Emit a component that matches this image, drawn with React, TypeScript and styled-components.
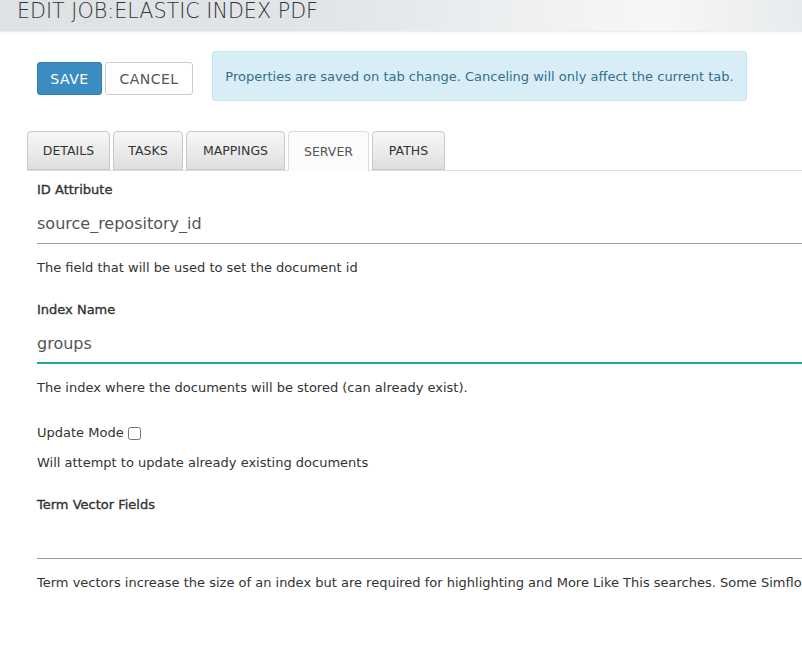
import React from "react";
import styled, { createGlobalStyle } from "styled-components";

const Global = createGlobalStyle`
  html, body { margin: 0; padding: 0; background: #fff; overflow: hidden; }
  body { font-family: "DejaVu Sans", "Open Sans", sans-serif; color: #333; }
  * { box-sizing: border-box; }
`;

const Header = styled.header`
  height: 32px;
  width: 100%;
  background: linear-gradient(to right, #dee2e5 0%, #e1e5e8 40%, #f6f7f8 82%, #e8ebed 100%);
  border-bottom: 1px solid #eceef0;
  box-shadow: 0 1px 2px rgba(0, 0, 0, 0.04);
`;

const Title = styled.h1`
  margin: 0;
  padding-left: 17px;
  font-size: 20.7px;
  line-height: 22px;
  font-weight: 300;
  color: #333;
  white-space: nowrap;
`;

const Main = styled.main`
  padding: 0 0 0 27px;
  width: 1000px;
`;

const Toolbar = styled.div`
  display: flex;
  align-items: flex-start;
  padding-left: 10px;
  margin-top: 19px;
`;

const Button = styled.button<{ $primary?: boolean; $w: number }>`
  width: ${(p) => p.$w}px;
  height: 33px;
  margin-top: 11px;
  padding: 0;
  font-family: inherit;
  font-size: 14px;
  letter-spacing: 0.5px;
  border-radius: 3px;
  border: 1px solid ${(p) => (p.$primary ? "#2e7db3" : "#ccc")};
  background: ${(p) => (p.$primary ? "#3a8cc1" : "#fff")};
  color: ${(p) => (p.$primary ? "#fff" : "#555")};
  margin-right: 3px;
  cursor: pointer;
`;

const Alert = styled.div`
  margin-left: 16px;
  width: 535px;
  height: 50px;
  display: flex;
  align-items: center;
  justify-content: center;
  background: #d9edf7;
  border: 1px solid #bce8f1;
  border-radius: 3px;
  color: #31708f;
  font-size: 13px;
  white-space: nowrap;
`;

const TabBar = styled.div`
  display: flex;
  gap: 3px;
  margin-top: 30px;
  border-bottom: 1px solid #ddd;
  height: 40px;
`;

const Tab = styled.div<{ $active?: boolean; $w: number }>`
  width: ${(p) => p.$w}px;
  height: ${(p) => (p.$active ? 40 : 39)}px;
  display: flex;
  align-items: center;
  justify-content: center;
  font-size: 12.5px;
  color: ${(p) => (p.$active ? "#555" : "#333")};
  border: 1px solid ${(p) => (p.$active ? "#ddd" : "#c8c8c8")};
  border-bottom: ${(p) => (p.$active ? "none" : "1px solid #c8c8c8")};
  border-radius: 4px 4px 0 0;
  background: ${(p) =>
    p.$active ? "#fbfbfb" : "linear-gradient(to bottom, #f7f7f7 0%, #e9e9e9 60%, #dedede 100%)"};
`;

const Form = styled.div`
  padding-left: 10px;
  padding-top: 11px;
`;

const Group = styled.div<{ $mb?: number }>`
  margin-bottom: ${(p) => p.$mb ?? 26}px;
`;

const Label = styled.label`
  display: block;
  font-size: 13px;
  line-height: 16px;
  font-weight: 400;
  color: #333;
  -webkit-text-stroke: 0.35px #333;
`;

const CheckLabel = styled.label`
  display: flex;
  align-items: center;
  margin-top: 3px;
  font-size: 13px;
  line-height: 16px;
  color: #333;
`;

const Check = styled.input`
  width: 13px;
  height: 13px;
  margin: 0 0 0 4px;
`;

const Input = styled.input<{ $focus?: boolean }>`
  display: block;
  width: 100%;
  height: 40px;
  margin-top: 6px;
  padding: 0;
  border: none;
  border-bottom: ${(p) => (p.$focus ? "2px solid #26a69a" : "1px solid #9e9e9e")};
  font-family: inherit;
  font-size: 16px;
  color: #555;
  outline: none;
  background: transparent;
`;

const Help = styled.div<{ $mt?: number }>`
  margin-top: ${(p) => p.$mt ?? 16}px;
  font-size: 13px;
  line-height: 16px;
  color: #333;
  white-space: nowrap;
`;

const tabs = [
  { name: "DETAILS", w: 83 },
  { name: "TASKS", w: 70 },
  { name: "MAPPINGS", w: 99 },
  { name: "SERVER", w: 81, active: true },
  { name: "PATHS", w: 73 },
];

export default function App() {
  return (
    <>
      <Global />
      <Header>
        <Title>EDIT JOB:ELASTIC INDEX PDF</Title>
      </Header>
      <Main>
        <Toolbar>
          <Button $primary $w={65}>SAVE</Button>
          <Button $w={88}>CANCEL</Button>
          <Alert>Properties are saved on tab change. Canceling will only affect the current tab.</Alert>
        </Toolbar>
        <TabBar>
          {tabs.map((t) => (
            <Tab key={t.name} $w={t.w} $active={t.active}>
              {t.name}
            </Tab>
          ))}
        </TabBar>
        <Form>
          <Group>
            <Label>ID Attribute</Label>
            <Input defaultValue="source_repository_id" />
            <Help>The field that will be used to set the document id</Help>
          </Group>
          <Group $mb={29}>
            <Label>Index Name</Label>
            <Input $focus defaultValue="groups" />
            <Help>The index where the documents will be stored (can already exist).</Help>
          </Group>
          <Group>
            <CheckLabel>
              Update Mode <Check type="checkbox" />
            </CheckLabel>
            <Help $mt={14}>Will attempt to update already existing documents</Help>
          </Group>
          <Group>
            <Label>Term Vector Fields</Label>
            <Input />
            <Help>
              Term vectors increase the size of an index but are required for highlighting and More Like This
              searches. Some Simflofy
            </Help>
          </Group>
        </Form>
      </Main>
    </>
  );
}
